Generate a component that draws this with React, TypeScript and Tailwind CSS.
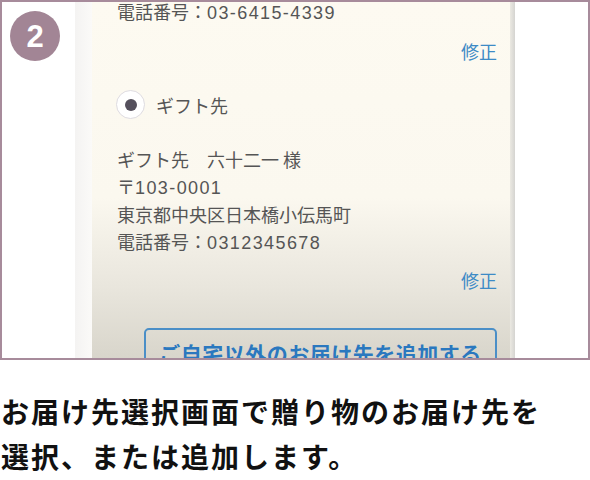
import React from "react";

const jp = { fontFamily: '"Noto Sans CJK JP", "Noto Sans", sans-serif' };
const num = "font-['Liberation_Sans',Arial,sans-serif] tracking-[1.4px]";

export default function App() {
  return (
    <div className="w-[590px] h-[480px] bg-white" style={jp}>
      <div className="relative h-[360px] border-2 border-[#a78b9b] bg-white overflow-hidden flex">
        <div className="absolute left-[8px] top-[9px] w-[50px] h-[50px] rounded-full bg-[#a28595] flex items-center justify-center text-white text-[31px] font-bold leading-none z-10" style={{ fontFamily: '"Liberation Sans", Arial, sans-serif' }}>
          2
        </div>
        <div className="ml-[73px] w-[440px] h-full flex">
          <div className="w-[17px] h-full bg-gradient-to-r from-[#f4f3f2] to-[#fbfaf8]" />
          <div className="w-[418px] h-full bg-[linear-gradient(to_bottom,#fdfaf1_0%,#fbf8ef_55%,#e9e6dd_80%,#d8d5cb_100%)] flex flex-col pl-[12px] pr-[13px] text-[#555] text-[18px]">
            <div className="-mt-[4px] h-[26px] leading-[26px] pl-[13px]">
              電話番号：<span className={num}>03-6415-4339</span>
            </div>
            <div className="text-right text-[#3d8bc6] leading-[26px] mt-[14px]">修正</div>
            <div className="h-[2px] bg-[#e6e2d8] mt-[1px]" />
            <div className="flex items-center mt-[25px] gap-[11px] pl-[12px]">
              <div className="w-[29px] h-[29px] rounded-full bg-white border border-[#dedbe0] flex items-center justify-center">
                <div className="w-[12px] h-[12px] rounded-full bg-[#55505c]" />
              </div>
              <span className="leading-[26px]">ギフト先</span>
            </div>
            <div className="pl-[13px] mt-[27px] leading-[26.5px]">
              <div>ギフト先　六十二一 様</div>
              <div>〒<span className={num}>103-0001</span></div>
              <div>東京都中央区日本橋小伝馬町</div>
              <div>電話番号：<span className={num}>0312345678</span></div>
            </div>
            <div className="text-right text-[#3d8bc6] leading-[26px] mt-[11px]">修正</div>
            <div className="h-[2px] bg-[#cbc7bd] mt-[11px]" />
            <div className="mt-[24px] ml-[40px] h-[44px] shrink-0 border-2 border-[#4b8fc7] rounded-[5px] flex justify-center pt-[9px] text-[#2a78bf] font-bold text-[21px] leading-[28px] tracking-[0.5px]">
              ご自宅以外のお届け先を追加する
            </div>
          </div>
          <div className="w-[5px] h-full bg-gradient-to-r from-[#ebe9e2] to-[#d5d4d1]" />
        </div>
      </div>
      <div className="pl-[1px] pt-[29px] text-[28px] font-bold text-[#111] leading-[45px] tracking-[2px]">
        <div>お届け先選択画面で贈り物のお届け先を</div>
        <div>選択、または追加します。</div>
      </div>
    </div>
  );
}
